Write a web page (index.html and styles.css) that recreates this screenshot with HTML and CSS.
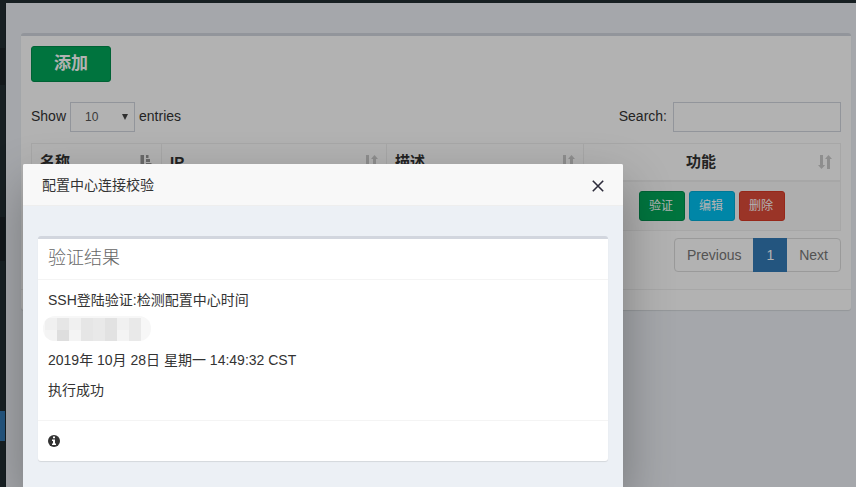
FILE: index.html
```html
<!DOCTYPE html>
<html lang="zh-CN">
<head>
<meta charset="utf-8">
<title>配置中心</title>
<link rel="stylesheet" href="styles.css">
</head>
<body>
<svg class="defs" width="0" height="0">
  <symbol id="sort" viewBox="0 0 14 14"><path d="M2 0h3v10h2.200L3.500 14 0 10h2zM9 14h3V4h2L10.500 0 7 4h2z"/></symbol>
  <symbol id="sort-asc" viewBox="0 0 14 14"><path d="M1.500 0h3.500v10H7L3.300 14 0 10h1.500zM7 0h2.500v3H7zM7 4h4v3H7zM7 8h5.500v3H7zM7 12H14v2H7z"/></symbol>
</svg>
<div class="app">
  <aside class="sidebar"><i class="seg user"></i><i class="seg heading"></i><i class="seg active"></i></aside>
  <main class="content">
    <section class="box page-box">
      <div class="box-main">
        <button class="btn add">添加</button>
        <div class="controls">
          <div class="length"><span class="word">Show</span> <span class="select">10<b></b></span> <span class="word">entries</span></div>
          <label class="search"><span class="word">Search:</span><input type="text"></label>
        </div>
        <table class="grid">
          <colgroup><col class="c1"><col class="c2"><col class="c3"><col class="c4"></colgroup>
          <thead><tr>
            <th><div>名称<svg class="on"><use href="#sort-asc"/></svg></div></th>
            <th><div>IP<svg><use href="#sort"/></svg></div></th>
            <th><div>描述<svg><use href="#sort"/></svg></div></th>
            <th class="center"><div><span>功能</span><svg><use href="#sort"/></svg></div></th>
          </tr></thead>
          <tbody><tr><td></td><td></td><td></td>
            <td><div class="actions"><button class="btn green">验证</button><button class="btn aqua">编辑</button><button class="btn red">删除</button></div></td>
          </tr></tbody>
        </table>
        <nav class="pagination"><a>Previous</a><a class="current">1</a><a>Next</a></nav>
      </div>
      <div class="page-footer"></div>
    </section>
  </main>
</div>
<div class="shade"></div>
<div class="dialog">
  <header class="dialog-title"><span>配置中心连接校验</span>
    <svg class="close" viewBox="0 0 12 12"><path d="M.8.8l10.400 10.400M11.200.8L.8 11.200"/></svg>
  </header>
  <div class="dialog-body">
    <section class="box">
      <h3 class="box-title">验证结果</h3>
      <div class="result">
        <p>SSH登陆验证:检测配置中心时间</p>
        <p class="masked"><span class="mosaic"><i></i><i></i><i></i><i></i><i></i><i></i><i></i><i></i><i></i><i></i><i></i><i></i><i></i><i></i><i></i><i></i></span></p>
        <p>2019年 10月 28日 星期一 14:49:32 CST</p>
        <p>执行成功</p>
      </div>
      <footer class="result-footer">
        <svg class="info" viewBox="0 0 12 12"><circle cx="6" cy="6" r="6"/><path d="M5 1.500h2v1.700H5zM4 4.500h3v4h1V10H4V8.500h1V6H4z"/></svg>
      </footer>
    </section>
  </div>
</div>
</body>
</html>
```

FILE: styles.css
```css
* { box-sizing: border-box; }
body { margin: 0; height: 487px; overflow: hidden; background: #222d32; color: #333; font: 14px/20px "Liberation Sans", "Noto Sans CJK SC", sans-serif; }
.defs { position: absolute; }
button, input { font: inherit; }
p, h3 { margin: 0; }
.app { display: flex; height: 487px; padding-top: 3px; }
.sidebar { width: 6px; background: #222d32; display: flex; flex-direction: column; border-right: 1px solid #1d272b; }
.seg { display: block; background: #1a2226; }
.user { margin-top: 45px; height: 37px; }
.heading { margin-top: 132px; height: 44px; }
.active { margin-top: 150px; height: 30px; background: #337ab7; }
.content { flex: 1; background: #ecf0f5; padding: 30px 5px 0 15px; }
.box { background: #fff; border-top: 3px solid #d2d6de; border-radius: 3px; box-shadow: 0 1px 1px rgba(0,0,0,.1); }
.page-box { height: 277px; }
.box-main { height: 253px; padding: 10px; }
.page-footer { border-top: 1px solid #f0f0f0; }
.btn { border: 1px solid; border-radius: 3px; color: #fff; padding: 0; display: block; }
.add { width: 80px; height: 36px; background: #00a65a; border-color: #008d4c; font-size: 17px; font-weight: 700; line-height: 34px; }
.controls { display: flex; justify-content: space-between; align-items: center; height: 30px; margin-top: 20px; }
.length { display: flex; align-items: center; gap: 4px; }
.word { padding-bottom: 2px; }
.select { width: 65px; height: 30px; border: 1px solid #d2d6de; display: flex; justify-content: space-between; align-items: center; padding: 0 6px 0 14px; font-size: 12px; color: #555; }
.select b { border: solid transparent; border-width: 6px 3px 0; border-top-color: #444; }
.search { display: flex; align-items: center; gap: 6px; }
.search input { width: 168px; height: 30px; border: 1px solid #d2d6de; background: #fff; padding: 0; }
.grid { width: 810px; margin-top: 11px; border-collapse: separate; border-spacing: 0; table-layout: fixed; border: solid #f0f0f0; border-width: 1px 0 0 1px; }
.c1 { width: 130px; } .c2 { width: 225px; } .c3 { width: 197px; }
.grid th, .grid td { border: 0 solid #f0f0f0; border-right-width: 1px; padding: 0 8px; }
.grid th { height: 38px; border-bottom-width: 2px; text-align: left; font-size: 15px; }
.grid th div { display: flex; align-items: center; justify-content: space-between; height: 36px; }
.grid th svg { width: 14px; height: 14px; fill: #ccc; }
.grid th svg.on { fill: #999; }
.grid .center span { flex: 1; text-align: center; margin-right: 8px; }
.grid td { height: 49px; background: #f9f9f9; border-right-width: 0; border-bottom-width: 1px; }
.grid td:last-child { border-right-width: 1px; }
.actions { display: flex; justify-content: center; gap: 4px; }
.actions .btn { width: 46px; height: 30px; font-size: 12px; padding-right: 2px; line-height: 28px; }
.green { background: #00a65a; border-color: #008d4c; }
.aqua { background: #00c0ef; border-color: #00acd6; }
.red { background: #dd4b39; border-color: #d73925; }
.pagination { display: flex; width: 167px; height: 34px; margin: 7px 0 0 auto; border: 1px solid #ddd; border-radius: 4px; color: #777; line-height: 32px; }
.pagination a { padding: 0 12px; }
.pagination .current { width: 34px; margin: -1px 0; padding: 0; text-align: center; line-height: 34px; background: #337ab7; color: #fff; }
.shade { position: absolute; inset: 0; background: rgba(0,0,0,.3); }
.dialog { position: absolute; left: 23px; top: 164px; width: 600px; height: 323px; border-radius: 2px 2px 0 0; background: #ecf0f5; box-shadow: 1px 20px 50px rgba(0,0,0,.3); }
.dialog-title { display: flex; justify-content: space-between; align-items: center; height: 42px; padding: 0 19px; background: #f8f8f8; border-bottom: 1px solid #eee; border-radius: 2px 2px 0 0; }
.close { width: 12px; height: 12px; margin-top: 2px; stroke: #2d2c3b; stroke-width: 1.6; fill: none; }
.dialog-body { padding: 30px 15px 0; }
.box-title { height: 41px; padding: 0 10px; border-bottom: 1px solid #f4f4f4; color: #666; font: 300 18px/39px "Liberation Sans", "Noto Sans CJK SC", sans-serif; }
.result { height: 140px; padding: 10px; }
.result p { height: 20px; margin-bottom: 10px; }
.masked { display: flex; margin-left: -5px; align-items: center; }
.mosaic { display: grid; grid-template: 12px 11px / repeat(8, 12px); width: 108px; height: 25px; padding: 2px 0 0 2px; flex-shrink: 0; margin-top: -3px; border-radius: 12px; overflow: hidden; background: #f7f7f7; }
.mosaic i { background: #f0f0f0; }
.mosaic i:nth-child(2), .mosaic i:nth-child(4), .mosaic i:nth-child(12) { background: #e6e6e6; }
.mosaic i:nth-child(5), .mosaic i:nth-child(8), .mosaic i:nth-child(13), .mosaic i:nth-child(16) { background: #e9e9e9; }
.mosaic i:nth-child(6), .mosaic i:nth-child(14) { background: #e2e2e2; }
.mosaic i:nth-child(10) { background: #dedede; }
.mosaic i:nth-child(9), .mosaic i:nth-child(11), .mosaic i:nth-child(15) { background: #f4f4f4; }
.result-footer { height: 41px; padding: 14px 10px; border-top: 1px solid #f4f4f4; }
.info { display: block; width: 12px; height: 12px; fill: #333; }
.info path { fill: #fff; }
```
